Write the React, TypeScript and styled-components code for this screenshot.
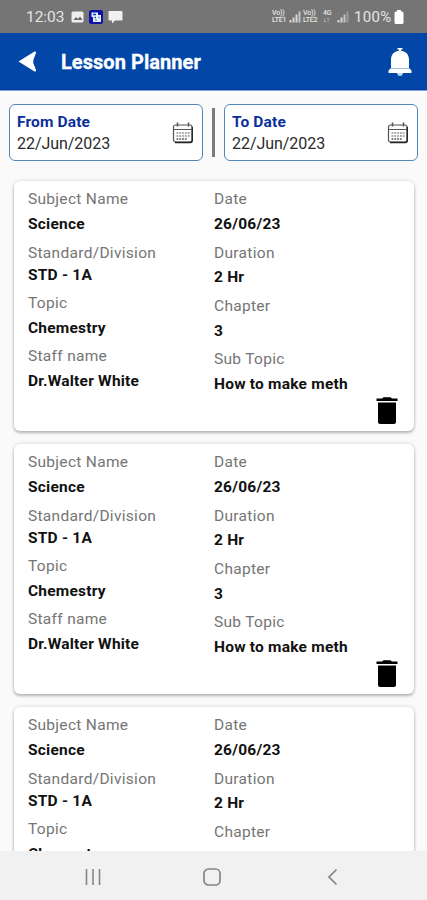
import React from "react";
import styled, { createGlobalStyle } from "styled-components";

const GlobalStyle = createGlobalStyle`
  * { box-sizing: border-box; }
  body { margin: 0; background: #fafafa; font-family: Roboto, "Noto Sans", sans-serif; }
`;

const Screen = styled.div`
  width: 427px;
  height: 900px;
  display: flex;
  flex-direction: column;
  overflow: hidden;
  background: #fafafa;
`;

const StatusBar = styled.div`
  height: 33px;
  flex: none;
  display: flex;
  align-items: center;
  justify-content: space-between;
  padding: 0 23px 0 26px;
  background: #757575;
  color: #e4e4e4;
`;

const StatusGroup = styled.div`
  display: flex;
  align-items: center;
`;

const Clock = styled.span`
  font-size: 15.5px;
  line-height: 18px;
  width: 45px;
  white-space: nowrap;
  letter-spacing: -0.05px;
`;

const Percent = styled.span`
  font-size: 15px;
  line-height: 18px;
  width: 40px;
  margin-left: 5px;
  padding-top: 1px;
  white-space: nowrap;
  letter-spacing: 0.3px;
`;

const NetLabel = styled.span<{ $width: number }>`
  width: ${(p) => p.$width}px;
  display: flex;
  flex-direction: column;
  font-size: 7px;
  line-height: 7px;
  font-weight: 500;
  letter-spacing: -0.2px;
  white-space: nowrap;
`;

const AppBar = styled.header`
  height: 57px;
  flex: none;
  display: flex;
  align-items: center;
  padding: 0 15px 0 18px;
  background: #0247a7;
  border-bottom: 1px solid #0337a0;
  box-shadow: 0 1px 0 #8ca3e0;
  color: #fff;
`;

const Title = styled.h1`
  flex: 1;
  margin: 1px 0 0 24px;
  font-size: 20px;
  line-height: 24px;
  font-weight: 700;
  letter-spacing: 0.05px;
  -webkit-text-stroke: 0.3px #fff;
`;

const Filters = styled.div`
  flex: none;
  display: flex;
  align-items: center;
  padding: 14px 8px 0 9px;
`;

const DateBox = styled.div<{ $width: number }>`
  width: ${(p) => p.$width}px;
  height: 57px;
  display: flex;
  align-items: center;
  justify-content: space-between;
  padding: 1px 8px 0 7px;
  background: #fff;
  border: 1px solid #5287bb;
  border-radius: 6px;
`;

const DateLabel = styled.div`
  font-size: 15.5px;
  line-height: 22px;
  font-weight: 700;
  letter-spacing: 0.15px;
  color: #0b2f9d;
`;

const DateValue = styled.div`
  font-size: 16px;
  line-height: 22px;
  letter-spacing: -0.05px;
  color: #2b2b2b;
`;

const Divider = styled.div`
  width: 3px;
  height: 49px;
  margin: 0 9px;
  background: #7a7a7a;
`;

const List = styled.main`
  flex: 1;
  min-height: 0;
  overflow: hidden;
  display: flex;
  flex-direction: column;
  gap: 13px;
  padding: 20px 13px 0 14px;
`;

const Card = styled.article`
  flex: none;
  height: 250px;
  display: grid;
  grid-template-columns: 186px 1fr;
  grid-template-rows: 207px 30px;
  padding: 9px 16px 0 14px;
  background: #fff;
  border-radius: 6px;
  box-shadow: 0 2px 3px rgba(0, 0, 0, 0.24), 0 0 4px rgba(0, 0, 0, 0.14);
`;

const Column = styled.div`
  display: flex;
  flex-direction: column;
`;

const Field = styled.div<{ $pitch: number; $gap: number }>`
  height: ${(p) => p.$pitch}px;
  flex: none;
  display: flex;
  flex-direction: column;
  gap: ${(p) => p.$gap}px;
`;

const Label = styled.span`
  font-size: 15.5px;
  line-height: 18px;
  letter-spacing: 0.3px;
  color: #757575;
  white-space: nowrap;
`;

const Value = styled.span`
  font-size: 15.5px;
  line-height: 18px;
  font-weight: 700;
  letter-spacing: 0.22px;
  color: #111;
  white-space: nowrap;
`;

const DeleteSlot = styled.div`
  grid-column: 2;
  display: flex;
  justify-content: flex-end;
  align-items: flex-start;
`;

const NavBar = styled.nav`
  height: 49px;
  flex: none;
  display: flex;
  align-items: center;
  padding: 2px 88px 0 84px;
  justify-content: space-between;
  background: #f1f1f1;
`;

const HomeIcon = styled.svg`
  margin-right: 5px;
`;

type FieldData = { label: string; value: string; pitch: number; gap: number };

const leftFields: FieldData[] = [
  { label: "Subject Name", value: "Science", pitch: 54, gap: 7 },
  { label: "Standard/Division", value: "STD - 1A", pitch: 50, gap: 4 },
  { label: "Topic", value: "Chemestry", pitch: 53, gap: 7 },
  { label: "Staff name", value: "Dr.Walter White", pitch: 50, gap: 7 },
];

const rightFields: FieldData[] = [
  { label: "Date", value: "26/06/23", pitch: 54, gap: 7 },
  { label: "Duration", value: "2 Hr", pitch: 53, gap: 6 },
  { label: "Chapter", value: "3", pitch: 53, gap: 7 },
  { label: "Sub Topic", value: "How to make meth", pitch: 47, gap: 7 },
];

const Fields = ({ items }: { items: FieldData[] }) => (
  <Column>
    {items.map((f) => (
      <Field key={f.label} $pitch={f.pitch} $gap={f.gap}>
        <Label>{f.label}</Label>
        <Value>{f.value}</Value>
      </Field>
    ))}
  </Column>
);

const NotificationIcons = () => (
  <svg width="52" height="16" viewBox="0 0 52 16">
    <rect x="0.5" y="2.5" width="12" height="11" rx="1.5" fill="#eee" />
    <path d="M2.5 11l2.5-3 2 2 2-2.5 2.5 3.5z" fill="#666" />
    <rect x="18" y="1" width="14" height="14" rx="2.5" fill="#0a12a8" />
    <path d="M20.500 3.500h6.500v2.500h3v7h-8v-5h-1.500z" fill="#e8f0ff" />
    <path d="M22 5.500h3M23.500 8.500h1.500M24.500 11h1M27.500 8.500h1" stroke="#0a45b8" strokeWidth="1.3" />
    <path d="M38.500 2h12q1 0 1 1v7.500q0 1-1 1h-6.500l-3 3v-3h-2.500q-1 0-1-1V3q0-1 1-1z" fill="#f0f0f0" />
  </svg>
);

const Signal = ({ weak }: { weak?: boolean }) => (
  <svg width="12" height="13" viewBox="0 0 12 13" fill="#d8d8d8">
    <rect x="0.500" y="10" width="2" height="2.500" />
    <rect x="3.500" y="7.500" width="2" height="5" />
    <rect x="6.500" y="4.500" width="2" height="8" opacity={weak ? 0.8 : 1} />
    <rect x="9.500" y="1.500" width="2" height="11" opacity={weak ? 0.4 : 0.8} />
  </svg>
);

const Battery = () => (
  <svg width="10" height="14" viewBox="0 0 10 14" fill="#fff">
    <path d="M3 0h4v1.500h1q1.500 0 1.500 1.500v9.500q0 1.500-1.500 1.500H2q-1.500 0-1.500-1.500V3q0-1.500 1.500-1.500h1z" />
  </svg>
);

const BackArrow = () => (
  <svg width="19" height="21" viewBox="0 0 19 21" fill="#fff">
    <path d="M0.500 10.500L16.500 0.500Q18.500 0 18 2L15.500 8.500Q15 10.500 15.500 12.500L18 19Q18.500 21 16.500 20.500z" />
  </svg>
);

const BellIcon = styled.svg`
  margin-top: 2px;
`;

const Bell = () => (
  <BellIcon width="24" height="30" viewBox="0 0 24 30" fill="#fff">
    <path d="M9.500 1h5v1.500h-1.500v1.300c5 .6 8 4 8 9V21l2.500 2.500V26H0.500v-2.500L3 21v-8.200c0-5 3-8.400 8-9V2.500H9.500z" />
    <path d="M9 26h6q-.5 3-3 3t-3-3z" fill="#c2d4ef" />
    <path d="M3 21.500h18" stroke="#8aaed8" strokeWidth="0.800" />
  </BellIcon>
);

const Calendar = () => (
  <svg width="22" height="22" viewBox="0 0 22 22" fill="none" stroke="#555">
    <rect x="1.500" y="3" width="18.500" height="17" rx="2" strokeWidth="1.200" />
    <path d="M20.300 5v13.500q0 2-2 2H3" strokeWidth="1.300" stroke="#222" />
    <path d="M2 7.500h18" strokeWidth="1" />
    <path d="M5.500 0.500v4M16.500 0.500v4" strokeWidth="1.500" />
    <path d="M4.500 11h13M4.500 14h13" strokeWidth="2" strokeDasharray="1.800 1" stroke="#aaa" />
    <path d="M4.500 17h11" strokeWidth="1.600" strokeDasharray="1.800 1" />
  </svg>
);

const Trash = () => (
  <svg width="22" height="28" viewBox="0 0 22 28" fill="#000">
    <path d="M0.500 1.500h5.500L7.500 0.200h7L16 1.500h5.500v2.500h-21z" />
    <path d="M2 5.500h18v19.500q0 2-2 2H4q-2 0-2-2z" />
  </svg>
);

const PlanCard = () => (
  <Card>
    <Fields items={leftFields} />
    <Fields items={rightFields} />
    <DeleteSlot>
      <Trash />
    </DeleteSlot>
  </Card>
);

const DateFilter = ({ label, width }: { label: string; width: number }) => (
  <DateBox $width={width}>
    <div>
      <DateLabel>{label}</DateLabel>
      <DateValue>22/Jun/2023</DateValue>
    </div>
    <Calendar />
  </DateBox>
);

export default function App() {
  return (
    <>
      <GlobalStyle />
      <Screen>
        <StatusBar>
          <StatusGroup>
            <Clock>12:03</Clock>
            <NotificationIcons />
          </StatusGroup>
          <StatusGroup>
            <NetLabel $width={17}>
              <span>Vo))</span>
              <span>LTE1</span>
            </NetLabel>
            <Signal />
            <NetLabel $width={2} />
            <NetLabel $width={20}>
              <span>Vo))</span>
              <span>LTE2</span>
            </NetLabel>
            <NetLabel $width={14}>
              <span>4G</span>
              <span>↓↑</span>
            </NetLabel>
            <Signal weak />
            <Percent>100%</Percent>
            <Battery />
          </StatusGroup>
        </StatusBar>
        <AppBar>
          <BackArrow />
          <Title>Lesson Planner</Title>
          <Bell />
        </AppBar>
        <Filters>
          <DateFilter label="From Date" width={194} />
          <Divider />
          <DateFilter label="To Date" width={194} />
        </Filters>
        <List>
          <PlanCard />
          <PlanCard />
          <PlanCard />
        </List>
        <NavBar>
          <svg width="18" height="18" viewBox="0 0 18 18" stroke="#858585" strokeWidth="1.600">
            <path d="M2.500 1v16M9 1v16M15.500 1v16" />
          </svg>
          <HomeIcon width="18" height="18" viewBox="0 0 18 18" fill="none" stroke="#858585" strokeWidth="1.700">
            <rect x="1" y="1" width="16" height="16" rx="4.500" />
          </HomeIcon>
          <svg width="12" height="18" viewBox="0 0 12 18" fill="none" stroke="#858585" strokeWidth="1.700">
            <path d="M9.500 1.500L2 9l7.500 7.500" />
          </svg>
        </NavBar>
      </Screen>
    </>
  );
}
